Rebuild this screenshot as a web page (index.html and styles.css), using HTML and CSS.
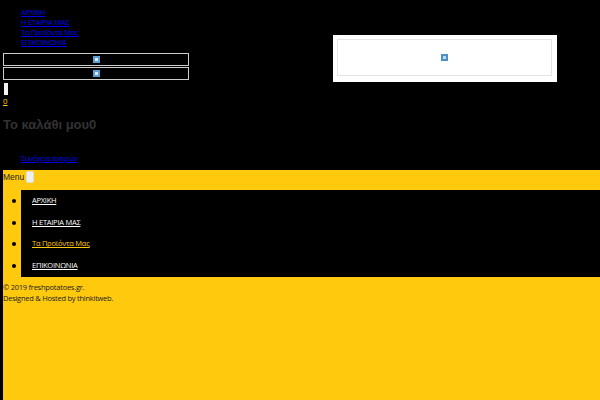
FILE: index.html
```html
<!DOCTYPE html>
<html lang="el">
<head>
    <meta charset="UTF-8">
    <title>freshpotatoes.gr</title>
    <link rel="stylesheet" href="styles.css">
</head>
<body>
<div class="top">
    <div class="top_left">
        <ul class="top_nav">
            <li><a href="#">ΑΡΧΙΚΗ</a></li>
            <li><a href="#">Η ΕΤΑΙΡΙΑ ΜΑΣ</a></li>
            <li><a href="#">Τα Προϊόντα Μας</a></li>
            <li><a href="#">ΕΠΙΚΟΙΝΩΝΙΑ</a></li>
        </ul>
        <div class="img_box"><svg width="7" height="7" viewBox="0 0 7 7"><rect width="7" height="7" fill="#5a9fd4"/><rect x="2" y="2" width="3" height="3" fill="#d8ecf8"/></svg></div>
        <div class="img_box"><svg width="7" height="7" viewBox="0 0 7 7"><rect width="7" height="7" fill="#5a9fd4"/><rect x="2" y="2" width="3" height="3" fill="#d8ecf8"/></svg></div>
    </div>
    <div class="banner">
        <div class="banner_inner"><svg width="7" height="7" viewBox="0 0 7 7"><rect width="7" height="7" fill="#4f90c4"/><rect x="2" y="2" width="3" height="3" fill="#b9dcef"/></svg></div>
    </div>
</div>
<div class="cart">
    <div class="search_btn"></div>
    <a class="cart_count" href="#">0</a>
    <h2 class="cart_title">Το καλάθι μου0</h2>
    <ul class="cart_links">
        <li><a href="#">Συνέχεια αγορών</a></li>
    </ul>
</div>
<div class="main">
    <div class="menu_row">Menu <button class="menu_btn">&nbsp;</button></div>
    <ul class="main_nav">
        <li><a href="#">ΑΡΧΙΚΗ</a></li>
        <li><a href="#">Η ΕΤΑΙΡΙΑ ΜΑΣ</a></li>
        <li><a class="active" href="#">Τα Προϊόντα Μας</a></li>
        <li><a href="#">ΕΠΙΚΟΙΝΩΝΙΑ</a></li>
    </ul>
    <div class="footer">
        <div>© 2019 freshpotatoes.gr.</div>
        <div>Designed &amp; Hosted by thinkitweb.</div>
    </div>
</div>
</body>
</html>
```
FILE: styles.css
```css
*{
    margin: 0;
    padding: 0;
    box-sizing: border-box;
}
html,body
{
    height: 100%;
}
body
{
    background: #000;
    font-family: "Open Sans", "Liberation Sans", sans-serif;
    font-size: 7.5px;
    letter-spacing: -0.25px;
    line-height: 10px;
    padding-left: 3px;
    overflow: hidden;
}
.top
{
    display: flex;
    height: 83px;
}
.top_left
{
    width: 186px;
}
.top_nav
{
    list-style: none;
    padding: 7px 0 6px 18px;
}
.top_nav li
{
    height: 10px;
}
.top_nav a,.cart_links a
{
    color: #0000ee;
}
.img_box
{
    height: 13px;
    margin-bottom: 1px;
    border: 1px solid #ccc;
    display: flex;
    align-items: center;
    justify-content: center;
}
.img_box svg,.banner_inner svg
{
    display: block;
}
.banner
{
    width: 224px;
    height: 47px;
    margin: 35px 0 0 144px;
    padding: 4px 5px 6px 4px;
    background: #fff;
}
.banner_inner
{
    height: 37px;
    border: 1px solid #e4e4e4;
    display: flex;
    align-items: center;
    justify-content: center;
}
.cart
{
    height: 87px;
}
.search_btn
{
    width: 4px;
    height: 12px;
    margin-left: 1px;
    background: #f2f2f2;
}
.cart_count
{
    display: block;
    margin-top: 1px;
    color: #ffc90e;
    height: 10px;
    font-size: 8px;
    letter-spacing: 0;
}
.cart_title
{
    margin-top: 11px;
    color: #333;
    font-family: "Liberation Sans", sans-serif;
    font-size: 13px;
    letter-spacing: 0;
    line-height: 16px;
}
.cart_links
{
    list-style: none;
    margin-top: 20px;
    padding-left: 18px;
}
.main
{
    height: 230px;
    background: #ffc90e;
    color: #222;
}
.menu_row
{
    height: 20px;
    padding-top: 1px;
    display: flex;
    align-items: flex-start;
    gap: 2px;
    font-family: "Liberation Sans", sans-serif;
    font-size: 8.5px;
    letter-spacing: 0;
    line-height: 12px;
}
.menu_btn
{
    width: 8px;
    height: 12px;
    background: #f0f0f0;
    border: 1px solid #ddd;
    border-radius: 2px;
}
.main_nav
{
    margin-left: 18px;
    height: 87px;
    background: #000;
    list-style: none;
}
.main_nav li
{
    position: relative;
    height: 21.7px;
    line-height: 21.7px;
    padding-left: 11px;
}
.main_nav li::before
{
    content: "";
    position: absolute;
    left: -9px;
    top: 9px;
    width: 4px;
    height: 4px;
    border-radius: 50%;
    background: #000;
}
.main_nav a
{
    color: #fff;
}
.main_nav a.active
{
    color: #ffc90e;
}
.footer
{
    padding-top: 5px;
    line-height: 11px;
}
```
